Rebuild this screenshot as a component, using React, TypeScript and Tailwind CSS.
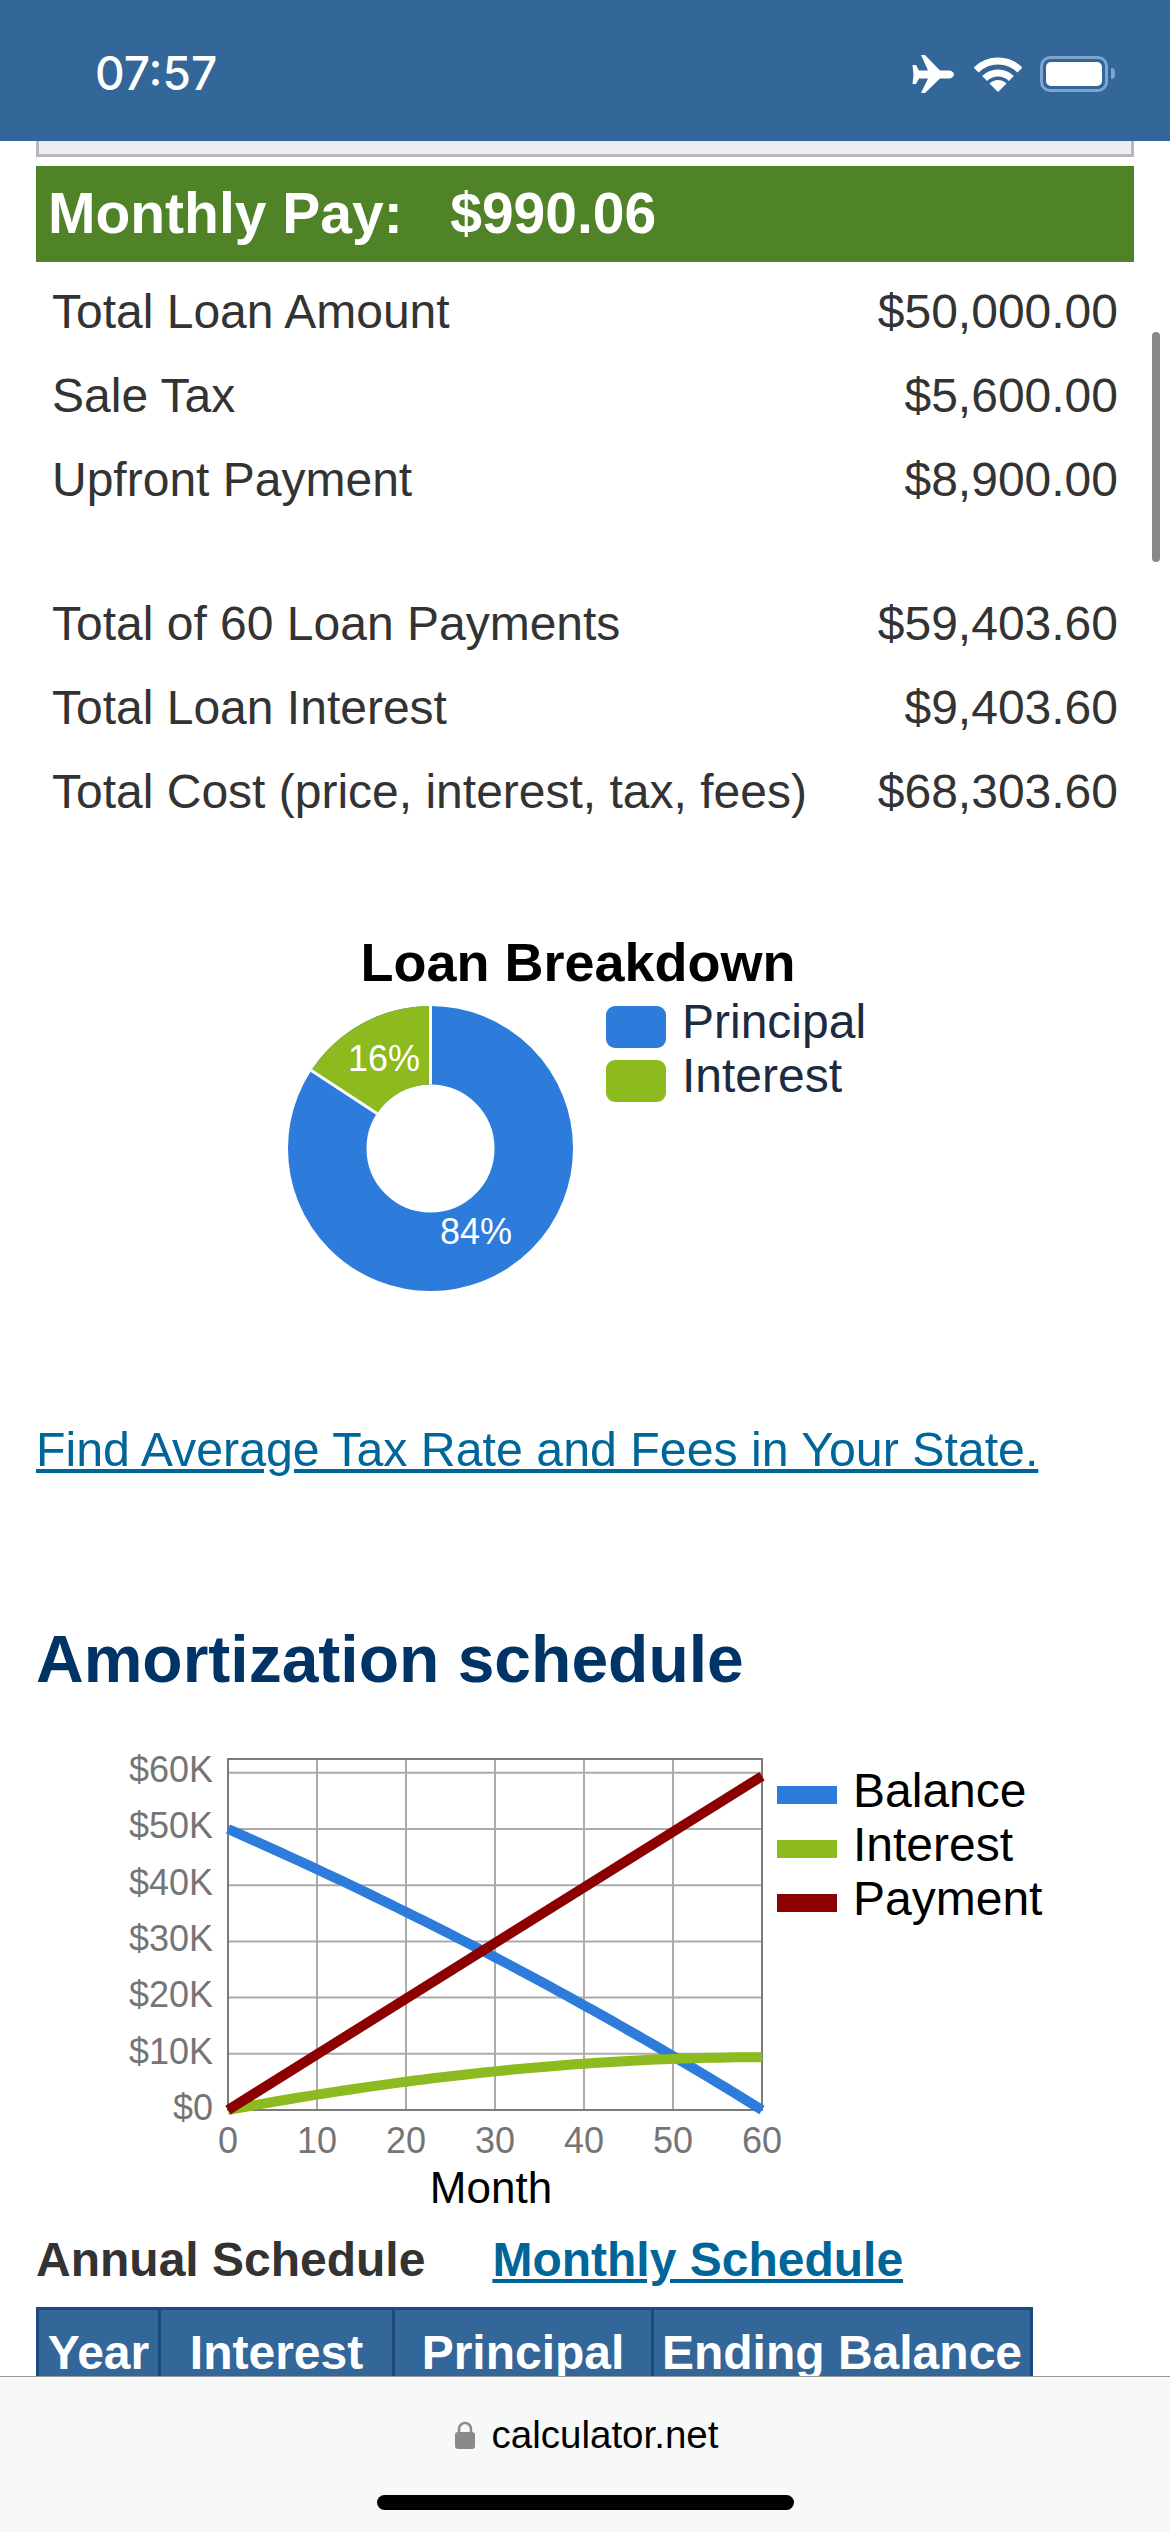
const rows = [
  { label: "Total Loan Amount", value: "$50,000.00" },
  { label: "Sale Tax", value: "$5,600.00" },
  { label: "Upfront Payment", value: "$8,900.00" },
];

const totals = [
  { label: "Total of 60 Loan Payments", value: "$59,403.60" },
  { label: "Total Loan Interest", value: "$9,403.60" },
  { label: "Total Cost (price, interest, tax, fees)", value: "$68,303.60" },
];

const chartX = (month: number) => 228 + month * 8.9;
const chartY = (value: number) => 2110 - (value / 10000) * 56.2;

function buildLines() {
  const rate = 0.07 / 12;
  let balance = 50000;
  let paidInterest = 0;
  const balancePts = [`${chartX(0)},${chartY(balance)}`];
  const interestPts = [`${chartX(0)},${chartY(0)}`];
  for (let m = 1; m <= 60; m++) {
    const interest = balance * rate;
    paidInterest += interest;
    balance = Math.max(0, balance - (990.06 - interest));
    balancePts.push(`${chartX(m)},${chartY(balance)}`);
    interestPts.push(`${chartX(m)},${chartY(paidInterest)}`);
  }
  return { balance: balancePts.join(" "), interest: interestPts.join(" ") };
}

function StatusBar() {
  return (
    <div className="flex h-[141px] items-center justify-between bg-[#336699] pt-[6px] pr-[55px] pl-[95px]">
      <span className="font-['Inter',sans-serif] text-[46px] font-medium text-white">07:57</span>
      <div className="flex items-center">
        <svg width="42" height="38" viewBox="0 0 42 38" fill="#fff">
          <path d="M42 19.5C42 17 39 15.5 36 15.5H28L13 0H9L16 15.5H7L4 10H0.5L1.5 19.5L0.5 29H4L7 23.5H16L9 38H13L28 23.5H36C39 23.5 42 22 42 19.5Z" />
        </svg>
        <svg className="ml-[20px]" width="48" height="36" viewBox="0 0 48 36" fill="none" stroke="#fff">
          <path d="M2.1 14.1A31 31 0 0 1 45.9 14.1" strokeWidth="7" />
          <path d="M10.6 22.6A19 19 0 0 1 37.4 22.6" strokeWidth="7" />
          <path d="M24 36L15.5 27.5A12 12 0 0 1 32.5 27.5Z" fill="#fff" stroke="none" />
        </svg>
        <div className="ml-[18px] flex items-center">
          <div className="flex h-[36px] w-[68px] items-center justify-center rounded-[10px] border-[3px] border-[#7da6cf]">
            <div className="h-[24px] w-[56px] rounded-[5px] bg-white" />
          </div>
          <div className="ml-[3px] h-[11px] w-[4px] rounded-r-full bg-[#7da6cf]" />
        </div>
      </div>
    </div>
  );
}

function SummaryRow({ label, value }: { label: string; value: string }) {
  return (
    <div className="flex h-[84px] items-center justify-between px-4 text-[48px] text-[#333333]">
      <span>{label}</span>
      <span>{value}</span>
    </div>
  );
}

function LoanBreakdown() {
  return (
    <svg className="mt-[86px] block" width="1098" height="390" viewBox="36 920 1098 390">
      <text x="578" y="981" textAnchor="middle" fontSize="54" fontWeight="700" fill="#000">
        Loan Breakdown
      </text>
      <circle cx="430.5" cy="1148.5" r="103.25" fill="none" stroke="#2d7cdb" strokeWidth="78.5" />
      <path d="M430.5 1006A142.5 142.5 0 0 0 311.3 1070.5L377 1113.5A64 64 0 0 1 430.5 1084.5Z" fill="#8cba1f" />
      <path d="M430.5 1006V1084.5M311.3 1070.5L377 1113.5" stroke="#fff" strokeWidth="3" />
      <text x="384" y="1071" textAnchor="middle" fontSize="36" fill="#fff">16%</text>
      <text x="476" y="1244" textAnchor="middle" fontSize="36" fill="#fff">84%</text>
      <rect x="606" y="1006" width="60" height="42" rx="9" fill="#2d7cdb" />
      <rect x="606" y="1060" width="60" height="42" rx="9" fill="#8cba1f" />
      <text x="682" y="1038" fontSize="48" fill="#1c2b41">Principal</text>
      <text x="682" y="1092" fontSize="48" fill="#1c2b41">Interest</text>
    </svg>
  );
}

function AmortizationChart() {
  const lines = buildLines();
  const months = [0, 10, 20, 30, 40, 50, 60];
  const values = [0, 10, 20, 30, 40, 50, 60];

  return (
    <svg className="mt-[33px] block" width="1098" height="490" viewBox="36 1730 1098 490">
      {values.slice(1).map((v) => (
        <line key={v} x1="228" x2="762" y1={chartY(v * 1000)} y2={chartY(v * 1000)} stroke="#ababab" strokeWidth="2" />
      ))}
      {months.slice(1, -1).map((m) => (
        <line key={m} x1={chartX(m)} x2={chartX(m)} y1="1759" y2="2110" stroke="#ababab" strokeWidth="2" />
      ))}
      <rect x="228" y="1759" width="534" height="351" fill="none" stroke="#7b7b7b" strokeWidth="2" />
      {values.map((v) => (
        <text key={v} x="213" y={chartY(v * 1000) + 10 + (v / 60) * -1} textAnchor="end" fontSize="36" fill="#757575">
          {v === 0 ? "$0" : `$${v}K`}
        </text>
      ))}
      {months.map((m) => (
        <text key={m} x={chartX(m)} y="2153" textAnchor="middle" fontSize="36" fill="#757575">
          {m}
        </text>
      ))}
      <polyline points={lines.balance} fill="none" stroke="#2d7cdb" strokeWidth="10" />
      <polyline points={lines.interest} fill="none" stroke="#8cba1f" strokeWidth="10" />
      <line x1="228" y1="2110" x2={chartX(60)} y2={chartY(59403)} stroke="#8b0000" strokeWidth="10" />
      <rect x="777" y="1786" width="60" height="18" fill="#2d7cdb" />
      <rect x="777" y="1840" width="60" height="18" fill="#8cba1f" />
      <rect x="777" y="1894" width="60" height="18" fill="#8b0000" />
      <text x="853" y="1807" fontSize="48" fill="#000">Balance</text>
      <text x="853" y="1861" fontSize="48" fill="#000">Interest</text>
      <text x="853" y="1915" fontSize="48" fill="#000">Payment</text>
      <text x="491" y="2203" textAnchor="middle" fontSize="44" fill="#000">Month</text>
    </svg>
  );
}

function BottomBar() {
  return (
    <div className="absolute right-0 bottom-0 left-0 flex h-[156px] flex-col items-center border-t border-[#999999] bg-[#f7f8f8]">
      <div className="mt-[28px] ml-[3px] flex h-[60px] items-center gap-[17px]">
        <svg width="20" height="28" viewBox="0 0 20 28">
          <path d="M4 12V8a6 6 0 0 1 12 0v4" fill="none" stroke="#8a8a8a" strokeWidth="2.5" />
          <rect x="0" y="11" width="20" height="17" rx="3" fill="#8a8a8a" />
        </svg>
        <span className="text-[38.5px] text-black">calculator.net</span>
      </div>
      <div className="mt-[30px] h-[15px] w-[417px] rounded-full bg-black" />
    </div>
  );
}

export default function App() {
  return (
    <div className="relative h-[2532px] overflow-hidden bg-white font-['Liberation_Sans',Arial,sans-serif]">
      <StatusBar />

      <div className="px-[36px]">
        <div className="h-[16px] border-x-[3px] border-b-[3px] border-[#b5b8be] bg-[#ecedee]" />

        <div className="mt-[9px] flex h-[96px] items-center whitespace-pre bg-[#508228] pl-[12px] text-[57px] font-bold text-white">
          {"Monthly Pay:   $990.06"}
        </div>

        <div className="mt-[8px]">
          {rows.map((row) => (
            <SummaryRow key={row.label} label={row.label} value={row.value} />
          ))}
        </div>
        <div className="mt-[60px]">
          {totals.map((row) => (
            <SummaryRow key={row.label} label={row.label} value={row.value} />
          ))}
        </div>

        <LoanBreakdown />

        <a className="mt-[111px] block text-[48.3px] leading-[56px] text-[#006699] underline" href="#">
          Find Average Tax Rate and Fees in Your State.
        </a>

        <h2 className="mt-[144px] text-[66px] leading-[76px] font-bold text-[#003366]">Amortization schedule</h2>

        <AmortizationChart />

        <div className="mt-[10px] flex h-[60px] items-center text-[48px] font-bold">
          <span className="text-[#333333]">Annual Schedule</span>
          <a className="ml-[67px] text-[#006699] underline" href="#">
            Monthly Schedule
          </a>
        </div>

        <table className="mt-[17px] w-[997px] table-fixed border-collapse bg-[#336699] text-[48px] font-bold text-white">
          <thead>
            <tr className="h-[120px]">
              <th className="w-[122px] border-[3px] border-[#1a4a80] pb-[32px] font-bold">Year</th>
              <th className="w-[234px] border-[3px] border-[#1a4a80] pb-[32px] font-bold">Interest</th>
              <th className="w-[259px] border-[3px] border-[#1a4a80] pb-[32px] font-bold">Principal</th>
              <th className="border-[3px] border-[#1a4a80] pb-[32px] font-bold">Ending Balance</th>
            </tr>
          </thead>
        </table>
      </div>

      <div className="absolute top-[332px] right-[10px] h-[230px] w-[8px] rounded-full bg-[#888888]" />

      <BottomBar />
    </div>
  );
}
